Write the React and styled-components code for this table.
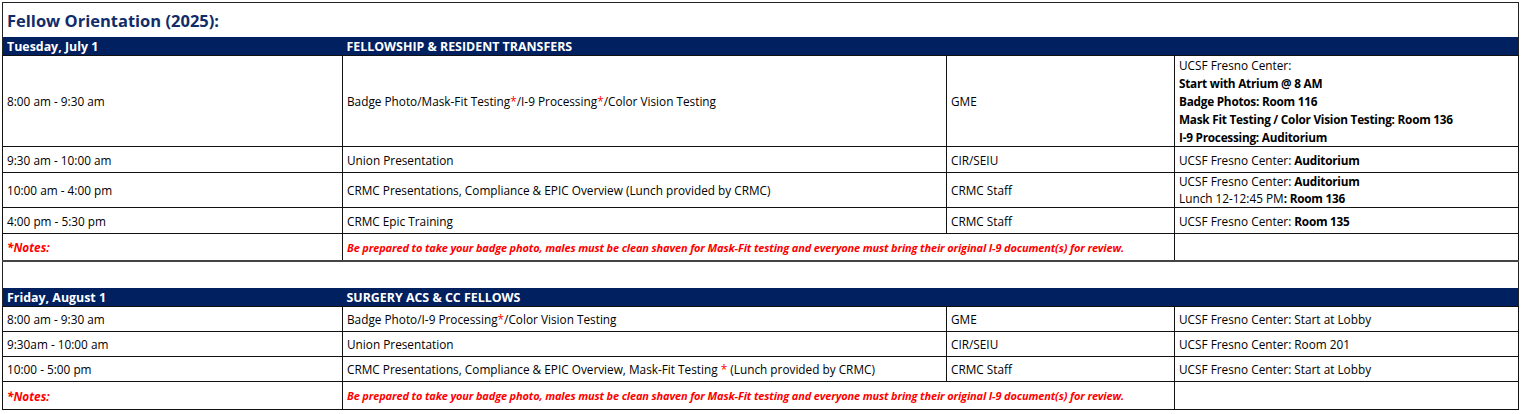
import React from "react";
import styled, { createGlobalStyle } from "styled-components";

const Global = createGlobalStyle`
  html, body { margin: 0; padding: 0; background: #fff; }
  body { padding: 2px; font-family: "Open Sans", "Noto Sans", sans-serif; color: #000; }
`;

const Sheet = styled.table`
  border-collapse: collapse;
  table-layout: fixed;
  width: 1516px;
  border: 1.5px solid #222;
  font-size: 11.8px;
  td { padding: 0 4px; vertical-align: middle; white-space: nowrap; overflow: visible; }
`;

const TitleCell = styled.td`
  height: 34px;
  font-size: 16.5px;
  font-weight: 700;
  color: #112c68;
`;

const HeadRow = styled.tr`
  background: #002060;
  color: #fff;
  font-weight: 700;
  font-size: 12.4px;
  td { height: 17px; border-bottom: 1.5px solid #111; padding-top: 1px; }
`;

const Row = styled.tr`
  td {
    height: ${(p) => p.$h || 24}px;
    border: 1px solid #111;
  }
`;

const SpacerRow = styled.tr`
  td { height: 26px; border-top: 2px solid #444; }
`;

const Star = styled.span`
  color: #ff0000;
`;

const Line = styled.div`
  line-height: ${(p) => p.$lh || 18}px;
  font-weight: ${(p) => (p.$bold ? 700 : 400)};
  letter-spacing: ${(p) => (p.$bold ? "-0.25px" : "0")};
`;

const B = styled.b`
  font-weight: 700;
  letter-spacing: -0.25px;
`;

const NoteLabel = styled.td`
  color: #ff0000;
  font-weight: 700;
  font-style: italic;
`;

const NoteText = styled.td`
  color: #ff0000;
  font-weight: 700;
  font-style: italic;
  font-size: 11px;
  letter-spacing: -0.15px;
`;

const notes =
  "Be prepared to take your badge photo, males must be clean shaven for Mask-Fit testing and everyone must bring their original I-9 document(s) for review.";

export default function App() {
  return (
    <>
      <Global />
      <Sheet>
        <colgroup>
          <col style={{ width: 340 }} />
          <col style={{ width: 604 }} />
          <col style={{ width: 228 }} />
          <col style={{ width: 344 }} />
        </colgroup>
        <tbody>
          <tr>
            <TitleCell colSpan={4}>Fellow Orientation (2025):</TitleCell>
          </tr>
          <HeadRow>
            <td>Tuesday, July 1</td>
            <td colSpan={3}>FELLOWSHIP &amp; RESIDENT TRANSFERS</td>
          </HeadRow>
          <Row $h={89}>
            <td>8:00 am - 9:30 am</td>
            <td>
              Badge Photo/Mask-Fit Testing<Star>*</Star>/I-9 Processing<Star>*</Star>/Color Vision Testing
            </td>
            <td>GME</td>
            <td>
              <Line>UCSF Fresno Center:</Line>
              <Line $bold>Start with Atrium @ 8 AM</Line>
              <Line $bold>Badge Photos: Room 116</Line>
              <Line $bold>Mask Fit Testing / Color Vision Testing: Room 136</Line>
              <Line $bold>I-9 Processing: Auditorium</Line>
            </td>
          </Row>
          <Row $h={25}>
            <td>9:30 am - 10:00 am</td>
            <td>Union Presentation</td>
            <td>CIR/SEIU</td>
            <td>
              UCSF Fresno Center: <B>Auditorium</B>
            </td>
          </Row>
          <Row $h={34}>
            <td>10:00 am - 4:00 pm</td>
            <td>CRMC Presentations, Compliance &amp; EPIC Overview (Lunch provided by CRMC)</td>
            <td>CRMC Staff</td>
            <td>
              <Line $lh={17}>
                UCSF Fresno Center: <B>Auditorium</B>
              </Line>
              <Line $lh={17}>
                Lunch 12-12:45 PM<B>: Room 136</B>
              </Line>
            </td>
          </Row>
          <Row $h={25}>
            <td>4:00 pm - 5:30 pm</td>
            <td>CRMC Epic Training</td>
            <td>CRMC Staff</td>
            <td>
              UCSF Fresno Center: <B>Room 135</B>
            </td>
          </Row>
          <Row $h={26}>
            <NoteLabel>*Notes:</NoteLabel>
            <NoteText colSpan={2}>{notes}</NoteText>
            <td />
          </Row>
          <SpacerRow>
            <td colSpan={4} />
          </SpacerRow>
          <HeadRow>
            <td>Friday, August 1</td>
            <td colSpan={3}>SURGERY ACS &amp; CC FELLOWS</td>
          </HeadRow>
          <Row $h={24}>
            <td>8:00 am - 9:30 am</td>
            <td>
              Badge Photo/I-9 Processing<Star>*</Star>/Color Vision Testing
            </td>
            <td>GME</td>
            <td>UCSF Fresno Center: Start at Lobby</td>
          </Row>
          <Row $h={24}>
            <td>9:30am - 10:00 am</td>
            <td>Union Presentation</td>
            <td>CIR/SEIU</td>
            <td>UCSF Fresno Center: Room 201</td>
          </Row>
          <Row $h={24}>
            <td>10:00 - 5:00 pm</td>
            <td>
              CRMC Presentations, Compliance &amp; EPIC Overview, Mask-Fit Testing <Star>*</Star> (Lunch provided by CRMC)
            </td>
            <td>CRMC Staff</td>
            <td>UCSF Fresno Center: Start at Lobby</td>
          </Row>
          <Row $h={27}>
            <NoteLabel>*Notes:</NoteLabel>
            <NoteText colSpan={2}>{notes}</NoteText>
            <td />
          </Row>
        </tbody>
      </Sheet>
    </>
  );
}
